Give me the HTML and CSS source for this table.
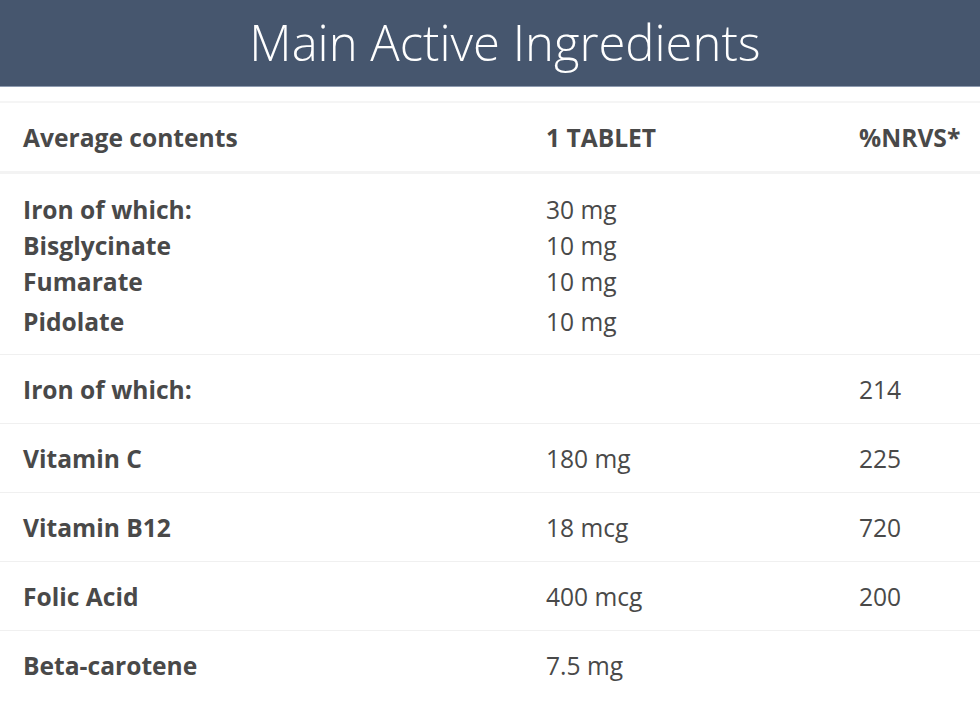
FILE: index.html
```html
<!DOCTYPE html>
<html lang="en">
<head>
<meta charset="utf-8">
<title>Main Active Ingredients</title>
<link rel="stylesheet" href="styles.css">
</head>
<body>
<header class="banner"><h1 class="banner-title">Main Active Ingredients</h1></header>
<section class="table">
  <div class="row row-head">
    <div class="cell">Average contents</div>
    <div class="cell">1 TABLET</div>
    <div class="cell">%NRVS*</div>
  </div>
  <div class="row row-multi">
    <div class="cell name">
      <span class="line">Iron of which:</span>
      <span class="line">Bisglycinate</span>
      <span class="line">Fumarate</span>
      <span class="line last">Pidolate</span>
    </div>
    <div class="cell val">
      <span class="line">30 mg</span>
      <span class="line">10 mg</span>
      <span class="line">10 mg</span>
      <span class="line last">10 mg</span>
    </div>
    <div class="cell val"></div>
  </div>
  <div class="row">
    <div class="cell name">Iron of which:</div>
    <div class="cell val"></div>
    <div class="cell val">214</div>
  </div>
  <div class="row">
    <div class="cell name">Vitamin C</div>
    <div class="cell val">180 mg</div>
    <div class="cell val">225</div>
  </div>
  <div class="row">
    <div class="cell name">Vitamin B12</div>
    <div class="cell val">18 mcg</div>
    <div class="cell val">720</div>
  </div>
  <div class="row">
    <div class="cell name">Folic Acid</div>
    <div class="cell val">400 mcg</div>
    <div class="cell val">200</div>
  </div>
  <div class="row row-last">
    <div class="cell name">Beta-carotene</div>
    <div class="cell val">7.5 mg</div>
    <div class="cell val"></div>
  </div>
</section>
</body>
</html>
```
FILE: styles.css
```css
html, body {
  margin: 0;
  padding: 0;
  background: #ffffff;
}
body {
  font-family: "Open Sans", "Liberation Sans", sans-serif;
  color: #494949;
  width: 980px;
}
.banner {
  height: 87px;
  background: #46566e;
  border-bottom: 1px solid #8e9bb0;
  box-sizing: border-box;
  display: flex;
  align-items: center;
  justify-content: center;
  padding-left: 30px;
}
.banner-title {
  margin: 0;
  font-weight: 300;
  font-size: 49px;
  line-height: 1;
  color: #ffffff;
  letter-spacing: 0;
  padding-bottom: 2px;
}
.table {
  margin-top: 14px;
  border-top: 2px solid #f5f5f5;
}
.row {
  display: grid;
  grid-template-columns: 523px 313px 1fr;
  padding-left: 23px;
  height: 69px;
  align-items: center;
  border-bottom: 1px solid #f0f0f0;
  font-size: 24.6px;
  box-sizing: border-box;
}
.row-head {
  height: 71px;
  border-bottom: 3px solid #f3f3f3;
  font-weight: 700;
}
.row-multi {
  height: 181px;
  align-items: start;
  padding-top: 18px;
}
.row-last {
  border-bottom: none;
}
.cell.name {
  font-weight: 700;
}
.cell.val {
  font-weight: 400;
}
.line {
  display: block;
  line-height: 36px;
}
.line.last {
  margin-top: 4px;
}
```
